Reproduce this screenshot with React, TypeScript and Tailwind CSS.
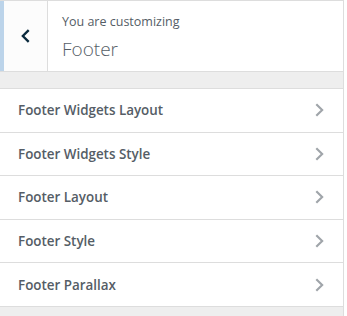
const items = [
  "Footer Widgets Layout",
  "Footer Widgets Style",
  "Footer Layout",
  "Footer Style",
  "Footer Parallax",
];

const Chevron = ({ className }: { className: string }) => (
  <svg viewBox="0 0 20 20" className={className} fill="none" stroke="currentColor" strokeWidth="2.4">
    <path d="M7 3.5l6.5 6.5L7 16.5" />
  </svg>
);

const App = () => {
  return (
    <div
      className="w-[347px] h-[316px] bg-white overflow-hidden"
      style={{ fontFamily: '"Open Sans", "Noto Sans", sans-serif' }}
    >
      <div className="w-[344px] h-full bg-[#eeeeee] border-r border-[#dddddd]">
        {/* header */}
        <div className="h-[72px] flex bg-white border-t border-b border-[#dddddd]">
          <div className="w-[4px] bg-[#bcd4ea]" />
          <button className="w-[44px] flex items-center justify-center bg-[#fcfcfc] border-r border-[#dddddd] text-[#0a2a3d]">
            <svg viewBox="0 0 20 20" className="w-[18px] h-[18px]" fill="none" stroke="currentColor" strokeWidth="2.6">
              <path d="M13 3.5L6.5 10l6.5 6.5" />
            </svg>
          </button>
          <div className="flex flex-col pl-[14px] pt-[11px]">
            <span className="text-[12.5px] leading-[20px] text-[#555d66]">You are customizing</span>
            <span className="text-[19px] leading-[28px] font-light text-[#555d66] mt-[3px]">Footer</span>
          </div>
        </div>

        <div className="h-[16px]" />

        {/* section list */}
        <div className="bg-white border-t border-[#dddddd]">
          {items.map((label) => (
            <div
              key={label}
              className="h-[43.6px] flex items-center justify-between pl-[18px] pr-[15px] border-b border-[#dddddd]"
            >
              <span className="text-[13.4px] font-semibold text-[#555d66]">{label}</span>
              <Chevron className="w-[18px] h-[18px] text-[#a0a5aa]" />
            </div>
          ))}
        </div>
      </div>
    </div>
  );
};

export default App;
